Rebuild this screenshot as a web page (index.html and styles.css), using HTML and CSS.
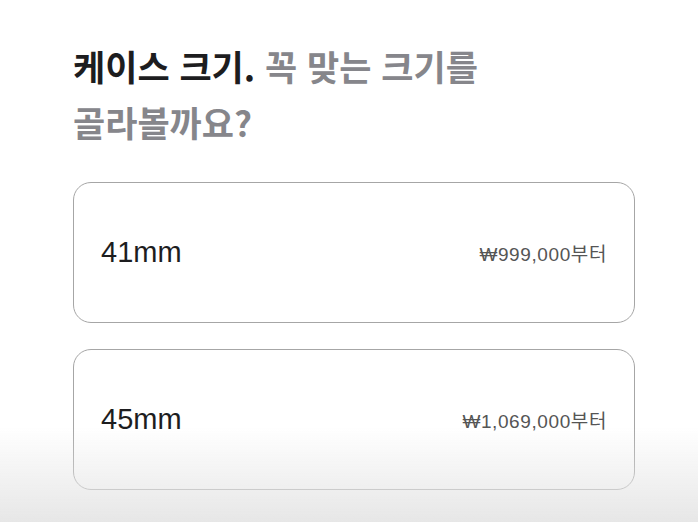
FILE: index.html
```html
<!DOCTYPE html>
<html lang="ko">
<head>
    <meta charset="UTF-8">
    <meta name="viewport" content="width=device-width, initial-scale=1.0">
    <title>케이스 크기</title>
    <link rel="stylesheet" href="styles.css">
</head>
<body>
<div class="container">
    <h2 class="section-title">
        <span class="title-strong">케이스 크기.</span>
        <span class="title-muted">꼭 맞는 크기를 골라볼까요?</span>
    </h2>
    <div class="size-list">
        <button class="size-option">
            <span class="size-name">41mm</span>
            <span class="size-price">₩999,000부터</span>
        </button>
        <button class="size-option">
            <span class="size-name">45mm</span>
            <span class="size-price">₩1,069,000부터</span>
        </button>
    </div>
</div>
<div class="bottom-fade"></div>
</body>
</html>
```

FILE: styles.css
```css
body {
    margin: 0;
    background: #fff;
    font-family: "Noto Sans CJK KR", "Noto Sans", sans-serif;
    color: #1d1d1f;
}

.container {
    padding: 38px 63px 0 73px;
}

.section-title {
    margin: 0 0 32px;
    font-size: 35px;
    line-height: 56px;
    font-weight: 700;
    letter-spacing: 0;
    max-width: 430px;
    word-break: keep-all;
}

.title-strong {
    color: #1d1d1f;
}

.title-muted {
    color: #86868b;
}

.size-list {
    display: flex;
    flex-direction: column;
    gap: 26px;
}

.size-option {
    display: flex;
    align-items: center;
    justify-content: space-between;
    box-sizing: border-box;
    height: 141px;
    padding: 0 27px;
    background: #fff;
    border: 1px solid #a6a6a6;
    border-radius: 18px;
    font-family: inherit;
    cursor: pointer;
}

.size-name {
    font-family: "Liberation Sans", Arial, sans-serif;
    font-size: 29px;
    color: #1d1d1f;
}

.size-price {
    font-family: "Liberation Sans", "Noto Sans CJK KR", sans-serif;
    font-size: 19px;
    letter-spacing: 0.6px;
    color: #555;
}

.bottom-fade {
    position: fixed;
    left: 0;
    right: 0;
    bottom: 0;
    height: 95px;
    background: linear-gradient(to bottom, rgba(230, 230, 230, 0), rgba(228, 228, 228, 0.9));
    pointer-events: none;
}
```
